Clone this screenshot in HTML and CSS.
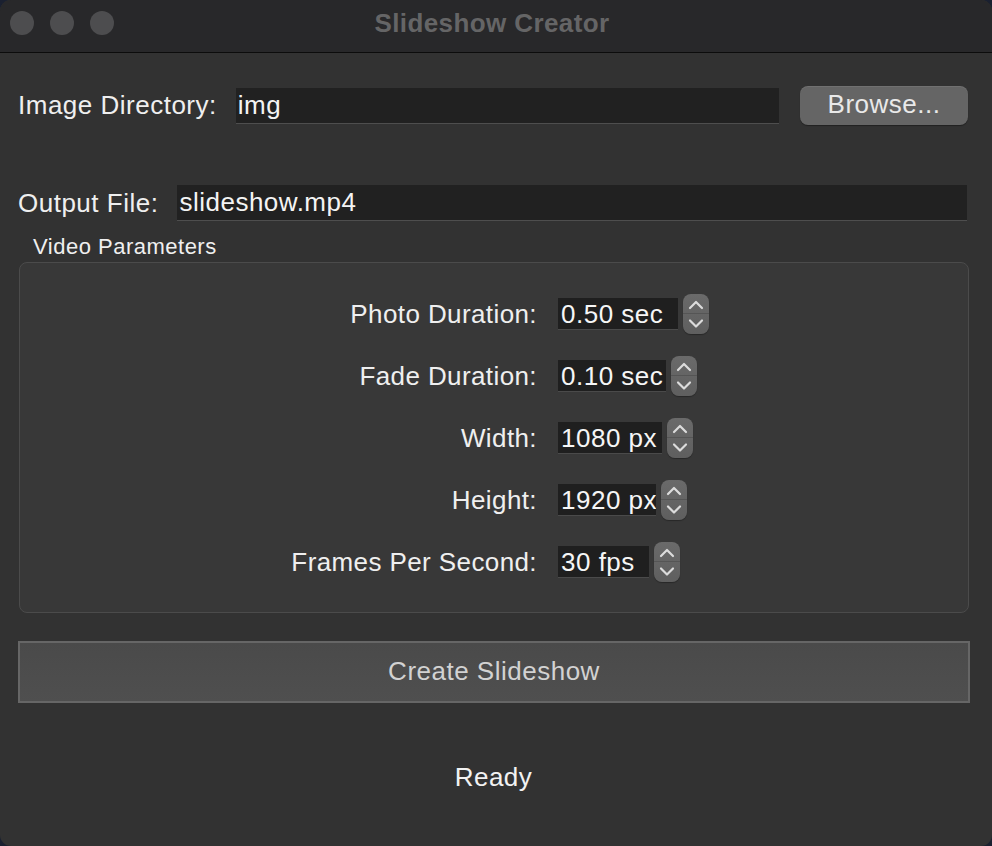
FILE: index.html
```html
<!DOCTYPE html>
<html>
<head>
<meta charset="utf-8">
<title>Slideshow Creator</title>
<link rel="stylesheet" href="styles.css">
</head>
<body>
<div class="window">
  <div class="titlebar">
    <div class="lights">
      <span class="light"></span><span class="light"></span><span class="light"></span>
    </div>
    <div class="title">Slideshow Creator</div>
  </div>
  <div class="content">
    <div class="row row-dir">
      <span class="label">Image Directory:</span>
      <div class="input input-dir">img</div>
      <button class="browse">Browse...</button>
    </div>
    <div class="row row-out">
      <span class="label">Output File:</span>
      <div class="input input-out">slideshow.mp4</div>
    </div>
    <div class="group-title">Video Parameters</div>
    <div class="group">
      <div class="form">
        <span class="flabel">Photo Duration:</span>
        <div class="spin"><div class="field w120">0.50 sec</div><div class="stepper"><svg viewBox="0 0 26 40" width="26" height="40"><path d="M7 14 L13 8 L19 14" /><path d="M7 26.5 L13 32.5 L19 26.5" /></svg></div></div>
        <span class="flabel">Fade Duration:</span>
        <div class="spin"><div class="field w108">0.10 sec</div><div class="stepper"><svg viewBox="0 0 26 40" width="26" height="40"><path d="M7 14 L13 8 L19 14" /><path d="M7 26.5 L13 32.5 L19 26.5" /></svg></div></div>
        <span class="flabel">Width:</span>
        <div class="spin"><div class="field w104">1080 px</div><div class="stepper"><svg viewBox="0 0 26 40" width="26" height="40"><path d="M7 14 L13 8 L19 14" /><path d="M7 26.5 L13 32.5 L19 26.5" /></svg></div></div>
        <span class="flabel">Height:</span>
        <div class="spin"><div class="field w98">1920 px</div><div class="stepper"><svg viewBox="0 0 26 40" width="26" height="40"><path d="M7 14 L13 8 L19 14" /><path d="M7 26.5 L13 32.5 L19 26.5" /></svg></div></div>
        <span class="flabel">Frames Per Second:</span>
        <div class="spin"><div class="field w91">30 fps</div><div class="stepper"><svg viewBox="0 0 26 40" width="26" height="40"><path d="M7 14 L13 8 L19 14" /><path d="M7 26.5 L13 32.5 L19 26.5" /></svg></div></div>
      </div>
    </div>
    <button class="create">Create Slideshow</button>
    <div class="status">Ready</div>
  </div>
</div>
</body>
</html>
```
FILE: styles.css
```css
html, body {
  margin: 0;
  padding: 0;
  background: #1a2030;
}
body {
  font-family: "Liberation Sans", Arial, sans-serif;
  font-size: 26px;
  letter-spacing: 0.5px;
  color: #efefef;
}
.window {
  width: 992px;
  height: 846px;
  background: #323232;
  border-radius: 11px;
  overflow: hidden;
  display: flex;
  flex-direction: column;
  box-sizing: border-box;
}
.titlebar {
  height: 52px;
  flex: 0 0 52px;
  background: #28282a;
  border-bottom: 1px solid #0c0c0c;
  position: relative;
  display: flex;
  align-items: center;
  justify-content: center;
}
.lights {
  position: absolute;
  left: 10px;
  top: 11px;
  display: flex;
  gap: 16px;
}
.light {
  width: 24px;
  height: 24px;
  border-radius: 50%;
  background: #4d4d4f;
}
.title {
  font-weight: bold;
  color: #656566;
  font-size: 26px;
  letter-spacing: 0.4px;
  margin-top: -6px;
  margin-right: 8px;
}
.content {
  flex: 1;
  display: flex;
  flex-direction: column;
  padding: 0 23px 0 18px;
}
.row {
  display: flex;
  align-items: center;
}
.row-dir {
  margin-top: 33px;
  height: 39px;
}
.row-out {
  margin-top: 60px;
  height: 36px;
}
.label {
  white-space: nowrap;
}
.input {
  box-sizing: border-box;
  height: 36px;
  background: #212121;
  border-bottom: 1px solid #4e4e4e;
  padding-left: 2px;
  line-height: 34px;
  color: #f4f4f4;
}
.input-dir {
  flex: 1;
  margin-left: 19px;
}
.input-out {
  flex: 1;
  margin-left: 19px;
  margin-right: 2px;
}
.browse {
  margin-left: 21px;
  width: 168px;
  height: 39px;
  margin-right: 1px;
  border: none;
  border-radius: 8px;
  background: #656565;
  color: #e9e9e9;
  font-family: inherit;
  font-size: 26px;
  letter-spacing: 0.5px;
  box-shadow: 0 1px 1px rgba(0,0,0,0.35), inset 0 1px 0 rgba(255,255,255,0.08);
  padding: 0 0 3px 0;
}
.group-title {
  margin-top: 13px;
  margin-left: 15px;
  font-size: 22px;
  line-height: 26px;
  letter-spacing: 0.5px;
}
.group {
  margin-top: 2px;
  margin-left: 1px;
  height: 351px;
  box-sizing: border-box;
  border: 1px solid #4b4b4b;
  border-radius: 8px;
  background: #383838;
  padding-top: 31px;
}
.form {
  display: grid;
  grid-template-columns: 517px auto;
  column-gap: 21px;
  row-gap: 22px;
  align-items: center;
}
.flabel {
  text-align: right;
  white-space: nowrap;
  letter-spacing: 0.4px;
}
.spin {
  display: flex;
  align-items: center;
  height: 40px;
}
.field {
  box-sizing: border-box;
  height: 32px;
  background: #1f1f1f;
  border-bottom: 1px solid #4a4a4a;
  line-height: 32px;
  padding-left: 3px;
  white-space: nowrap;
  overflow: hidden;
  color: #f6f6f6;
}
.w120 { width: 120px; }
.w108 { width: 108px; }
.w104 { width: 104px; }
.w98 { width: 98px; }
.w91 { width: 91px; }
.stepper {
  margin-left: 5px;
  width: 26px;
  height: 40px;
  border-radius: 8px;
  background: linear-gradient(#6a6a6a, #5f5f5f);
  position: relative;
  box-shadow: 0 1px 1px rgba(0,0,0,0.3);
}
.stepper::after {
  content: "";
  position: absolute;
  left: 0;
  right: 0;
  top: 19px;
  height: 1px;
  background: #555;
}
.stepper svg {
  display: block;
  fill: none;
  stroke: #dcdcdc;
  stroke-width: 2.2;
  stroke-linecap: round;
  stroke-linejoin: round;
}
.create {
  margin-top: 28px;
  margin-right: -1px;
  height: 62px;
  box-sizing: border-box;
  border: 2px solid #666;
  background: linear-gradient(#4a4a4a, #4f4f4f);
  color: #d2d2d2;
  font-family: inherit;
  font-size: 26px;
  letter-spacing: 0.5px;
  padding: 0 0 2px 0;
}
.status {
  margin-top: 59px;
  text-align: center;
  line-height: 30px;
  color: #f2f2f2;
}
```
